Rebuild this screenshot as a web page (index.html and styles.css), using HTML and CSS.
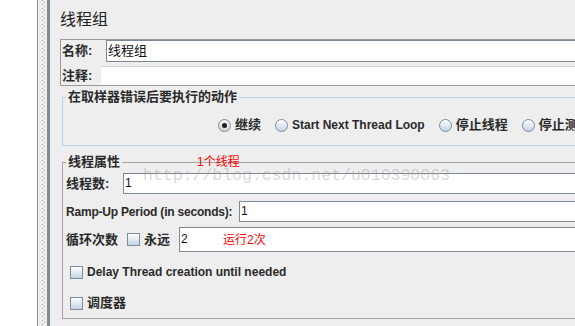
FILE: index.html
```html
<!DOCTYPE html>
<html lang="zh">
<head>
<meta charset="utf-8">
<title>线程组</title>
<link rel="stylesheet" href="styles.css">
</head>
<body>
<div class="app">
  <div class="tree"></div>
  <div class="splitter"><div class="grip"></div></div>
  <div class="edge"></div>
  <main class="main">
    <h1 class="title">线程组</h1>
    <div class="name-panel">
      <div class="np-row row-name">
        <span class="lbl lbl-name">名称:</span>
        <div class="field field-name">线程组</div>
      </div>
      <div class="np-row row-comment">
        <span class="lbl lbl-comment">注释:</span>
        <div class="field-comment"></div>
      </div>
    </div>

    <fieldset class="group group-action">
      <legend>在取样器错误后要执行的动作</legend>
      <div class="radios">
        <label class="opt"><span class="radio on"></span><span class="opt-text">继续</span></label>
        <label class="opt"><span class="radio"></span><span class="opt-text">Start Next Thread Loop</span></label>
        <label class="opt"><span class="radio"></span><span class="opt-text">停止线程</span></label>
        <label class="opt"><span class="radio"></span><span class="opt-text">停止测试</span></label>
      </div>
    </fieldset>

    <fieldset class="group group-props">
      <legend>线程属性</legend>
      <div class="prow prow-threads">
        <span class="plbl plbl-threads">线程数:</span>
        <div class="field pfield">1</div>
      </div>
      <div class="prow prow-ramp">
        <span class="plbl plbl-ramp">Ramp-Up Period (in seconds):</span>
        <div class="field pfield">1</div>
      </div>
      <div class="prow prow-loop">
        <span class="plbl plbl-loop">循环次数</span>
        <span class="check"></span>
        <span class="forever">永远</span>
        <div class="field pfield loopfield">2</div>
      </div>
      <div class="crow crow-delay">
        <span class="check"></span>
        <span class="ctext">Delay Thread creation until needed</span>
      </div>
      <div class="crow crow-sched">
        <span class="check"></span>
        <span class="ctext">调度器</span>
      </div>
    </fieldset>
  </main>

  <div class="note note-threads">1个线程</div>
  <div class="note note-loops">运行2次</div>
  <div class="watermark">http://blog.csdn.net/u010390063</div>
</div>
</body>
</html>
```
FILE: styles.css
```css
html, body {
  margin: 0;
  padding: 0;
  width: 575px;
  height: 326px;
  overflow: hidden;
  background: #eeeeee;
}

.app {
  position: relative;
  display: flex;
  height: 326px;
  font-family: "Liberation Sans", "Noto Sans CJK SC", sans-serif;
  color: #2a2a2a;
}

.tree {
  flex: 0 0 37px;
  background: #ffffff;
}

.splitter {
  flex: 0 0 10px;
  box-sizing: border-box;
  border-left: 1px solid #8e8e8e;
  background: #eeeeee;
  display: flex;
}

.grip {
  width: 3px;
  margin-left: 4px;
  background:
    repeating-linear-gradient(#a9a9a9 0 1px, transparent 1px 4px) 0 0 / 1px 100% no-repeat,
    repeating-linear-gradient(#a9a9a9 0 1px, transparent 1px 4px) 2px 2px / 1px 100% no-repeat;
}

.edge {
  flex: 0 0 3px;
  background: #7e8c9a;
}

.main {
  flex: 0 0 560px;
  box-sizing: border-box;
  padding-left: 10px;
  white-space: nowrap;
}

.title {
  margin: 10px 0 0 0;
  height: 20px;
  font-size: 16px;
  line-height: 20px;
  font-weight: normal;
  color: #222;
}

/* name panel */
.name-panel {
  margin-top: 9px;
  border: 1px solid #9a9a9a;
  border-right: none;
}

.np-row {
  display: flex;
  align-items: center;
}

.row-name { height: 22px; }
.row-comment { height: 23px; align-items: flex-end; }

.lbl {
  box-sizing: border-box;
  padding-left: 1px;
  font-size: 13px;
  font-weight: bold;
  line-height: 16px;
}

.lbl-name { flex: 0 0 45px; }
.lbl-comment { flex: 0 0 40px; align-self: center; margin-top: 4px; }

.field {
  flex: 1;
  box-sizing: border-box;
  background: #ffffff;
  border: 1px solid #7c8a98;
  border-right: none;
  padding-left: 1px;
  font-size: 12px;
  color: #111;
}

.field-name {
  height: 22px;
  line-height: 20px;
  font-size: 13px;
}

.field-comment {
  flex: 1;
  height: 18px;
  background: #ffffff;
  border-top: 1px solid #d8d8d8;
}

/* groups */
.group {
  margin: 0 0 0 2px;
  padding: 0;
  border: 1px solid #a5a5a5;
  border-right: none;
  min-width: 0;
}

.group legend {
  margin-left: 3px;
  padding: 0 2px;
  font-size: 13px;
  font-weight: bold;
  line-height: 14px;
  color: #2a2a2a;
}

.group-action {
  margin-top: 4px;
  border-color: #b9cfe4;
}

.radios {
  display: flex;
  align-items: center;
  height: 20px;
  padding: 11px 0 10px 155px;
}

.opt {
  display: flex;
  align-items: center;
  margin-right: 14px;
}

.opt-text {
  margin-left: 4px;
  font-size: 12px;
  font-weight: bold;
  line-height: 16px;
}

.opt:nth-child(1) .opt-text { font-size: 13px; }
.opt:nth-child(3) .opt-text,
.opt:nth-child(4) .opt-text { font-size: 13px; }

.radio {
  position: relative;
  width: 13px;
  height: 13px;
  box-sizing: border-box;
  border-radius: 50%;
  border: 1px solid #7f8b98;
  background: linear-gradient(#ffffff, #c3d3e5);
}

.radio.on {
  background: linear-gradient(#f4f4f4, #d6d6d6);
}

.radio.on::after {
  content: "";
  position: absolute;
  left: 3px;
  top: 3px;
  width: 5px;
  height: 5px;
  border-radius: 50%;
  background: #1e1e1e;
}

.group-props {
  margin-top: 9px;
  padding: 0 0 5px 3px;
}

.group-props legend {
  margin-left: 0;
}

.prow {
  display: flex;
  align-items: center;
}

.plbl {
  box-sizing: border-box;
  font-size: 13px;
  font-weight: bold;
  line-height: 16px;
}

.prow-threads { margin-top: 4px; height: 21px; }
.prow-ramp { margin-top: 7px; height: 21px; }
.prow-loop { margin-top: 5px; height: 25px; }

.plbl-threads { flex: 0 0 57px; }
.plbl-ramp { flex: 0 0 173px; font-size: 12px; letter-spacing: -0.2px; }
.plbl-loop { flex: 0 0 61px; }

.pfield {
  height: 21px;
  line-height: 19px;
}

.loopfield {
  height: 25px;
  line-height: 23px;
}

.check {
  flex: 0 0 13px;
  width: 13px;
  height: 13px;
  box-sizing: border-box;
  border: 1px solid #7f8b98;
  background: linear-gradient(#ffffff, #c3d3e5);
}

.forever {
  flex: 0 0 39px;
  box-sizing: border-box;
  padding-left: 4px;
  font-size: 13px;
  font-weight: bold;
  line-height: 16px;
}

.crow {
  display: flex;
  align-items: center;
  height: 20px;
  padding-left: 4px;
}

.crow-delay { margin-top: 10px; }
.crow-sched { margin-top: 11px; }

.ctext {
  margin-left: 4px;
  font-size: 12px;
  font-weight: bold;
  line-height: 16px;
}

.crow-sched .ctext { font-size: 13px; }

/* overlays: annotations and watermark drawn over the screenshot */
.note {
  position: absolute;
  color: #ff0000;
  font-family: "Liberation Sans", "Noto Sans CJK SC", sans-serif;
  font-size: 12px;
  line-height: 14px;
}

.note-threads { left: 197px; top: 155px; }
.note-loops { left: 223px; top: 233px; }

.watermark {
  position: absolute;
  left: 143px;
  top: 166px;
  font-family: "Liberation Mono", monospace;
  font-size: 16.5px;
  line-height: 20px;
  color: rgba(150, 150, 150, 0.38);
  white-space: nowrap;
}
```
